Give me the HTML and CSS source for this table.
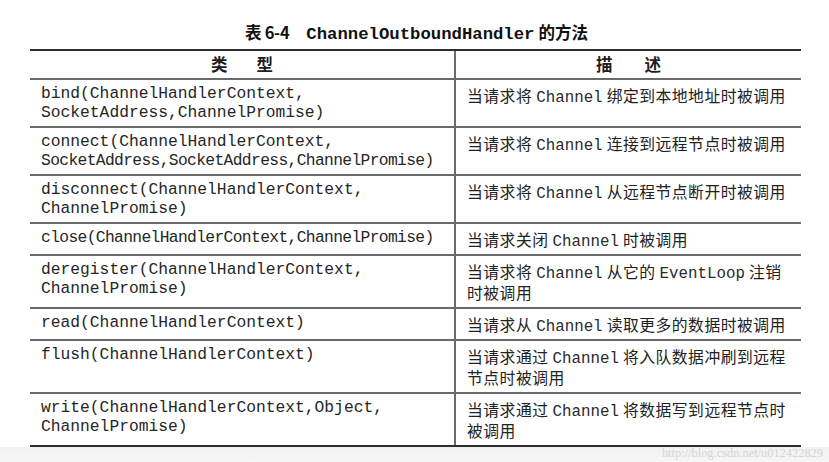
FILE: index.html
```html
<!DOCTYPE html>
<html lang="zh-CN">
<head>
<meta charset="utf-8">
<title>表 6-4 ChannelOutboundHandler 的方法</title>
<link rel="stylesheet" href="styles.css">
</head>
<body>
<div class="page">
  <h1 class="caption"><span class="cap-num">表 6-4</span><span class="cap-code">ChannelOutboundHandler</span><span class="cap-rest">的方法</span></h1>
  <table class="methods">
    <colgroup><col class="col-type"><col class="col-desc"></colgroup>
    <thead>
      <tr>
        <th><span class="spread"><span>类</span><span>型</span></span></th>
        <th><span class="spread wide"><span>描</span><span>述</span></span></th>
      </tr>
    </thead>
    <tbody>
      <tr>
        <td class="sig">bind(ChannelHandlerContext,<br>SocketAddress,ChannelPromise)</td>
        <td class="desc">当请求将 <span class="code">Channel</span> 绑定到本地地址时被调用</td>
      </tr>
      <tr>
        <td class="sig">connect(ChannelHandlerContext,<br><span class="squeeze">SocketAddress,SocketAddress,ChannelPromise)</span></td>
        <td class="desc">当请求将 <span class="code">Channel</span> 连接到远程节点时被调用</td>
      </tr>
      <tr>
        <td class="sig">disconnect(ChannelHandlerContext,<br>ChannelPromise)</td>
        <td class="desc">当请求将 <span class="code">Channel</span> 从远程节点断开时被调用</td>
      </tr>
      <tr>
        <td class="sig"><span class="squeeze">close(ChannelHandlerContext,ChannelPromise)</span></td>
        <td class="desc">当请求关闭 <span class="code">Channel</span> 时被调用</td>
      </tr>
      <tr>
        <td class="sig">deregister(ChannelHandlerContext,<br>ChannelPromise)</td>
        <td class="desc">当请求将 <span class="code">Channel</span> 从它的 <span class="code">EventLoop</span> 注销<br>时被调用</td>
      </tr>
      <tr>
        <td class="sig">read(ChannelHandlerContext)</td>
        <td class="desc">当请求从 <span class="code">Channel</span> 读取更多的数据时被调用</td>
      </tr>
      <tr>
        <td class="sig">flush(ChannelHandlerContext)</td>
        <td class="desc">当请求通过 <span class="code">Channel</span> 将入队数据冲刷到远程<br>节点时被调用</td>
      </tr>
      <tr>
        <td class="sig">write(ChannelHandlerContext,Object,<br>ChannelPromise)</td>
        <td class="desc">当请求通过 <span class="code">Channel</span> 将数据写到远程节点时<br>被调用</td>
      </tr>
    </tbody>
  </table>
</div>
<footer class="strip"><span class="watermark">http://blog.csdn.net/u012422829</span></footer>
</body>
</html>
```

FILE: styles.css
```css
html, body {
  margin: 0;
  padding: 0;
}

body {
  width: 829px;
  height: 462px;
  overflow: hidden;
  background: #ffffff;
  color: #1e1e1e;
  font-family: "Noto Sans CJK SC", "Liberation Sans", sans-serif;
  display: flex;
  flex-direction: column;
}

.page {
  padding: 20px 28px 0 30px;
  flex: none;
}

.caption {
  margin: 0 0 5px 0;
  height: 24px;
  line-height: 24px;
  font-size: 16.5px;
  font-weight: 700;
  text-align: center;
  color: #111;
  padding-left: 2px;
}

.cap-num {
  font-family: "Noto Sans CJK SC", sans-serif;
  letter-spacing: -0.3px;
}

.cap-code {
  font-family: "Liberation Mono", monospace;
  font-size: 17.3px;
  line-height: 0;
  margin-left: 17px;
  margin-right: 4px;
}

.cap-rest {
  font-family: "Noto Sans CJK SC", sans-serif;
}

.methods {
  width: 771px;
  border-collapse: collapse;
  table-layout: fixed;
  border-top: 2px solid #2e2e2e;
  border-bottom: 2px solid #2e2e2e;
}

.col-type {
  width: 425px;
}

.col-desc {
  width: 346px;
}

.methods th,
.methods td {
  border-top: 2px solid #6b6b6b;
  border-bottom: 2px solid #6b6b6b;
  vertical-align: top;
  text-align: left;
  white-space: nowrap;
}

.methods th + th,
.methods td + td {
  border-left: 2px solid #6b6b6b;
}

.methods thead th {
  border-top: 2px solid #2e2e2e;
  padding: 3px 0 3px 0;
  height: 21px;
  line-height: 21px;
  font-size: 16.5px;
  font-weight: 700;
  text-align: center;
}

.methods tbody tr:last-child td {
  border-bottom: 2px solid #2e2e2e;
}

.spread {
  display: inline-flex;
  gap: 29px;
  justify-content: center;
  line-height: 21px;
}

.spread.wide {
  gap: 32px;
}

.sig {
  padding: 5px 4px 4px 11px;
  font-family: "Liberation Mono", monospace;
  font-size: 16.3px;
  line-height: 18.5px;
  height: 18.5px;
  color: #262626;
}

.squeeze {
  letter-spacing: -0.64px;
}

.desc {
  padding: 5px 4px 4px 11px;
  font-family: "Noto Sans CJK SC", sans-serif;
  font-size: 15.8px;
  line-height: 21px;
  letter-spacing: 0.5px;
  color: #222;
}

.code {
  font-family: "Liberation Mono", monospace;
  font-size: 15.8px;
  line-height: 0;
  letter-spacing: 0;
  color: #2a2a2a;
}

.strip {
  flex: 1;
  display: flex;
  justify-content: flex-end;
  align-items: flex-start;
  background: linear-gradient(#f2f2f2, #f6f6f6);
  padding-right: 6px;
}

.watermark {
  font-family: "Liberation Serif", serif;
  font-size: 12.4px;
  line-height: 13px;
  color: #d4d4d4;
  margin-top: 0;
}
```
